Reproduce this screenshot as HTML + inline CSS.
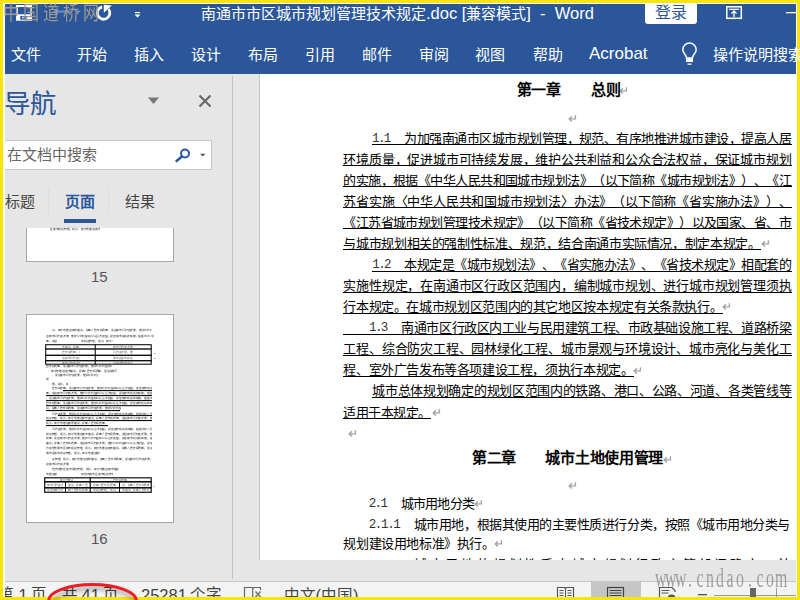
<!DOCTYPE html>
<html lang="zh-CN"><head><meta charset="utf-8">
<style>
*{margin:0;padding:0;box-sizing:border-box}
html,body{width:800px;height:600px;overflow:hidden;background:#f8e508;font-family:'Liberation Sans',sans-serif}
.a{position:absolute;white-space:pre}
svg{position:absolute;overflow:visible}
#win{position:absolute;left:3px;top:3px;width:794px;height:594px;background:#fff}
#blue{position:absolute;left:5px;top:4px;width:791px;height:70px;background:#2b579a}
.tab{position:absolute;top:45px;color:#fff;font-size:15px;line-height:20px;white-space:pre}
#main{position:absolute;left:5px;top:74px;width:791px;height:507px;background:#e6e6e6}
#doc{position:absolute;left:260px;top:74px;width:536px;height:486px;background:#fff;overflow:hidden}
.dl{position:absolute;white-space:pre;line-height:21px;color:#000;text-spacing-trim:space-all}
.ul{position:absolute;height:1px;background:#000}
.pm{position:absolute;font-family:'Liberation Sans',sans-serif;font-size:11px;line-height:14px;color:#a0a0a0}
#status{position:absolute;left:5px;top:581px;width:791px;height:16px;background:#f3f3f3;border-top:1px solid #c6c6c6;overflow:hidden}
.st{position:absolute;top:3px;font-size:15.5px;line-height:20px;color:#444;white-space:pre}
.lt{font-size:16.5px}
.ntab{position:absolute;top:192px;font-size:15px;line-height:20px;color:#444;white-space:pre}
.thumb{position:absolute;background:#fff;border:1px solid #a6a6a6}
.pn{position:absolute;font-size:15px;line-height:18px;color:#555}
.h{font-weight:bold;font-size:15px}
</style></head><body>
<div id="win"></div>
<div id="blue"></div>
<!-- QAT -->
<svg style="left:0;top:0" width="800" height="75">
  <!-- save -->
  <rect x="17" y="6" width="14" height="13.7" fill="none" stroke="#fff" stroke-width="2"/>
  <rect x="18" y="14.3" width="12" height="5" fill="#fff"/>
  <rect x="20.2" y="16" width="6.5" height="3.6" fill="#2b579a"/>
  <rect x="22.3" y="16.6" width="1.3" height="1.8" fill="#fff"/>
  <!-- faded undo -->
  <path d="M57 11.5 H70" stroke="#7f9ccc" stroke-width="2.2" fill="none" opacity="0.75"/>
  <path d="M53 11.5 l5 -4 v8z" fill="#7f9ccc" opacity="0.75"/>
  <path d="M75.5 10.5 h5.5 l-2.75 3z" fill="#7f9ccc" opacity="0.8"/>
  <!-- redo -->
  <path d="M102.1 6.8 A6.3 6.3 0 1 0 108.5 9" stroke="#fff" stroke-width="2.8" fill="none"/>
  <path d="M103.8 4.8 L111.8 5.6 L103.8 12.8 Z" fill="#fff"/>
  <!-- qat dropdown -->
  <rect x="135" y="12" width="5" height="1.2" fill="#fff"/>
  <path d="M134.5 14.5 h6 l-3 3z" fill="#fff"/>
  <!-- restore -->
  <rect x="726.8" y="6.8" width="14.5" height="11.5" fill="none" stroke="#fff" stroke-width="1.5"/>
  <path d="M729 9.3 h10" stroke="#fff" stroke-width="1.2"/>
  <path d="M734 17 v-5.5 M731.5 13.5 l2.5 -2.5 l2.5 2.5" stroke="#fff" stroke-width="1.3" fill="none"/>
  <!-- minimize -->
  <rect x="786" y="12" width="10" height="1.3" fill="#fff"/>
  <!-- bulb -->
  <path d="M686.5 58 C686.5 55 682.8 53 682.8 49.8 A6.7 6.7 0 0 1 696.2 49.8 C696.2 53 692.5 55 692.5 58 Z" fill="none" stroke="#fff" stroke-width="1.5"/>
  <rect x="686" y="58.5" width="7" height="3.5" fill="#fff"/>
  <rect x="687.5" y="63.5" width="4" height="1.3" fill="#fff"/>
</svg>
<div class="a" style="left:3px;top:0px;font-family:'Liberation Serif',serif;font-size:16px;line-height:24px;color:#a09a94;letter-spacing:4px;transform:scaleY(1.2);transform-origin:0 0">中国道桥网</div>
<div class="a" style="left:201px;top:3px;color:#fff;font-size:15px;line-height:20px">南通市市区城市规划管理技术规定<span style="font-size:16.5px">.doc [</span>兼容模式<span style="font-size:16.5px">]  -  Word</span></div>
<div class="a" style="left:645px;top:3px;width:52px;height:21px;background:#fff;border-radius:0 0 3px 3px"></div>
<div class="a" style="left:655px;top:2.5px;color:#2b579a;font-size:16px;line-height:20px">登录</div>
<div class="tab" style="left:11px">文件</div>
<div class="tab" style="left:76.5px">开始</div>
<div class="tab" style="left:133.5px">插入</div>
<div class="tab" style="left:191px">设计</div>
<div class="tab" style="left:248px">布局</div>
<div class="tab" style="left:305px">引用</div>
<div class="tab" style="left:362px">邮件</div>
<div class="tab" style="left:419px">审阅</div>
<div class="tab" style="left:475px">视图</div>
<div class="tab" style="left:533px">帮助</div>
<div class="tab" style="left:589px;font-size:17px;top:44px">Acrobat</div>
<div class="tab" style="left:712.5px">操作说明搜索</div>

<div id="main"></div>
<!-- nav pane -->
<div class="a" style="left:5px;top:140px;width:207px;height:30px;background:#fff;border:1px solid #c6c6c6;border-left:none"></div>

<div class="a" style="left:4px;top:88px;font-size:26.5px;line-height:32px;color:#2b579a">导航</div>
<svg style="left:0;top:0" width="240" height="580">
  <path d="M148 97.5 h11 l-5.5 6.5z" fill="#777"/>
  <path d="M199.5 95.5 L210.5 106.5 M210.5 95.5 L199.5 106.5" stroke="#666" stroke-width="2.1"/>
  <circle cx="185" cy="153.5" r="4" fill="none" stroke="#2b579a" stroke-width="2"/>
  <path d="M182 156.5 L176.5 161" stroke="#2b579a" stroke-width="2.4" stroke-linecap="round"/>
  <path d="M200 153.8 h5.5 l-2.75 2.6z" fill="#555"/>
  <rect x="48" y="188" width="1" height="26" fill="#dcdcdc"/>
  <rect x="108" y="188" width="1" height="26" fill="#dcdcdc"/>
  <rect x="64" y="219" width="32" height="4" fill="#2b579a"/>
  <rect x="232" y="76" width="1" height="503" fill="#c2c2c2"/>
  <rect x="259" y="74" width="1" height="486" fill="#c6c6c6"/>
</svg>
<div class="a" style="left:7px;top:145px;font-size:15px;line-height:20px;color:#666">在文档中搜索</div>
<div class="ntab" style="left:5px">标题</div>
<div class="ntab" style="left:65px;color:#2b579a;font-weight:bold">页面</div>
<div class="ntab" style="left:125px">结果</div>
<div class="thumb" style="left:26px;top:228px;width:148px;height:34px;border-top:none"></div>
<div class="pn" style="left:91px;top:268px">15</div>
<div class="thumb" style="left:26px;top:314px;width:148px;height:209px"></div>
<div style='position:absolute;left:0;top:0;width:1000px;height:2700px;transform:scale(0.2);transform-origin:0 0'><div style='position:absolute;left:260px;top:1643px;width:498px;height:20px;overflow:hidden;white-space:nowrap;font-size:14px;line-height:16px;color:#2a2a2a'>范、有序地推进城市建设，提高人居环境质量，促进城市可持续发展，维护公共利益和公众</div><div style='position:absolute;left:230px;top:1672px;width:540px;height:20px;overflow:hidden;white-space:nowrap;font-size:14px;line-height:16px;color:#2a2a2a'>进城市可持续发展，维护公共利益和公众合法权益，保证城市规划的实施，根据中华人民共和国城</div><div style='position:absolute;left:230px;top:1698px;width:55px;height:20px;overflow:hidden;white-space:nowrap;font-size:14px;line-height:16px;color:#2a2a2a'>量，促进城市</div><div style='position:absolute;left:405px;top:1698px;width:158px;height:20px;overflow:hidden;white-space:nowrap;font-size:14px;line-height:16px;color:#2a2a2a'>市规划管理，规范、有序地推进</div><div style='position:absolute;left:310px;top:1726px;width:90px;height:20px;overflow:hidden;white-space:nowrap;font-size:14px;line-height:16px;color:#666'>市建设，提高人居</div><div style='position:absolute;left:565px;top:1726px;width:100px;height:20px;overflow:hidden;white-space:nowrap;font-size:14px;line-height:16px;color:#666'>城市可持续发展，维</div><div style='position:absolute;left:310px;top:1753px;width:90px;height:20px;overflow:hidden;white-space:nowrap;font-size:14px;line-height:16px;color:#666'>居环境质量，促进</div><div style='position:absolute;left:565px;top:1753px;width:100px;height:20px;overflow:hidden;white-space:nowrap;font-size:14px;line-height:16px;color:#666'>可持续发展，维护公</div><div style='position:absolute;left:310px;top:1782px;width:90px;height:20px;overflow:hidden;white-space:nowrap;font-size:14px;line-height:16px;color:#666'>进城市可持续发展</div><div style='position:absolute;left:565px;top:1782px;width:100px;height:20px;overflow:hidden;white-space:nowrap;font-size:14px;line-height:16px;color:#666'>通市区城市规划管理</div><div style='position:absolute;left:310px;top:1807px;width:90px;height:20px;overflow:hidden;white-space:nowrap;font-size:14px;line-height:16px;color:#666'>城市可持续发展，</div><div style='position:absolute;left:565px;top:1807px;width:100px;height:20px;overflow:hidden;white-space:nowrap;font-size:14px;line-height:16px;color:#666'>为加强南通市区城市</div><div style='position:absolute;left:230px;top:1824px;width:330px;height:20px;overflow:hidden;white-space:nowrap;font-size:14px;line-height:16px;color:#2a2a2a'>居环境质量，促进城市可持续发展，维护公共利益和公众合法</div><div style='position:absolute;left:240px;top:1845px;width:345px;height:20px;overflow:hidden;white-space:nowrap;font-size:14px;line-height:16px;color:#2a2a2a'>、有序地推进城市建设，提高人居环境质量，促进城市可持续发</div><div style='position:absolute;left:260px;top:1866px;width:230px;height:20px;overflow:hidden;white-space:nowrap;font-size:14px;line-height:16px;color:#2a2a2a'>，促进城市可持续发展，维护公共利益和公</div><div style='position:absolute;left:230px;top:1885px;width:15px;height:20px;overflow:hidden;white-space:nowrap;font-size:14px;line-height:16px;color:#2a2a2a'>规范、</div><div style='position:absolute;left:260px;top:1910px;width:80px;height:20px;overflow:hidden;white-space:nowrap;font-size:14px;line-height:16px;color:#2a2a2a'>理，规范、有序地</div><div style='position:absolute;left:260px;top:1934px;width:500px;height:20px;overflow:hidden;white-space:nowrap;font-size:14px;line-height:16px;color:#2a2a2a'>居环境质量，促进城市可持续发展，维护公共利益和公众合法权益，保证城市规划的实施，</div><div style='position:absolute;left:230px;top:1958px;width:530px;height:20px;overflow:hidden;white-space:nowrap;font-size:14px;line-height:16px;color:#2a2a2a'>量，促进城市可持续发展，维护公共利益和公众合法权益，保证城市规划的实施，根据中华人民</div><div style='position:absolute;left:230px;top:1983px;width:530px;height:20px;overflow:hidden;white-space:nowrap;font-size:14px;line-height:16px;color:#2a2a2a'>，促进城市可持续发展，维护公共利益和公众合法权益，保证城市规划的实施，根据中华人民共</div><div style='position:absolute;left:230px;top:2008px;width:530px;height:20px;overflow:hidden;white-space:nowrap;font-size:14px;line-height:16px;color:#2a2a2a'>居环境质量，促进城市可持续发展，维护公共利益和公众合法权益，保证城市规划的实施，根据</div><div style='position:absolute;left:230px;top:2033px;width:375px;height:20px;overflow:hidden;white-space:nowrap;font-size:14px;line-height:16px;color:#2a2a2a'>设，提高人居环境质量，促进城市可持续发展，维护公共利益和公众</div><div style='position:absolute;left:260px;top:2060px;width:500px;height:20px;overflow:hidden;white-space:nowrap;font-size:14px;line-height:16px;color:#2a2a2a'>可持续发展，维护公共利益和公众合法权益，保证城市规划的实施，根据中华人民共和国城</div><div style='position:absolute;left:230px;top:2084px;width:530px;height:20px;overflow:hidden;white-space:nowrap;font-size:14px;line-height:16px;color:#2a2a2a'>规划管理，规范、有序地推进城市建设，提高人居环境质量，促进城市可持续发展，维护公共利</div><div style='position:absolute;left:230px;top:2108px;width:310px;height:20px;overflow:hidden;white-space:nowrap;font-size:14px;line-height:16px;color:#2a2a2a'>规范、有序地推进城市建设，提高人居环境质量，促进城</div><div style='position:absolute;left:260px;top:2138px;width:500px;height:20px;overflow:hidden;white-space:nowrap;font-size:14px;line-height:16px;color:#2a2a2a'>可持续发展，维护公共利益和公众合法权益，保证城市规划的实施，根据中华人民共和国城</div><div style='position:absolute;left:230px;top:2160px;width:530px;height:20px;overflow:hidden;white-space:nowrap;font-size:14px;line-height:16px;color:#2a2a2a'>规划管理，规范、有序地推进城市建设，提高人居环境质量，促进城市可持续发展，维护公共利</div><div style='position:absolute;left:230px;top:2184px;width:530px;height:20px;overflow:hidden;white-space:nowrap;font-size:14px;line-height:16px;color:#2a2a2a'>质量，促进城市可持续发展，维护公共利益和公众合法权益，保证城市规划的实施，根据中华人</div><div style='position:absolute;left:230px;top:2208px;width:530px;height:20px;overflow:hidden;white-space:nowrap;font-size:14px;line-height:16px;color:#2a2a2a'>建设，提高人居环境质量，促进城市可持续发展，维护公共利益和公众合法权益，保证城市规划</div><div style='position:absolute;left:230px;top:2230px;width:530px;height:20px;overflow:hidden;white-space:nowrap;font-size:14px;line-height:16px;color:#2a2a2a'>为加强南通市区城市规划管理，规范、有序地推进城市建设，提高人居环境质量，促进城市可持</div><div style='position:absolute;left:230px;top:2256px;width:270px;height:20px;overflow:hidden;white-space:nowrap;font-size:14px;line-height:16px;color:#2a2a2a'>通市区城市规划管理，规范、有序地推进城市建设</div><div style='position:absolute;left:260px;top:2286px;width:500px;height:20px;overflow:hidden;white-space:nowrap;font-size:14px;line-height:16px;color:#2a2a2a'>划管理，规范、有序地推进城市建设，提高人居环境质量，促进城市可持续发展，维护公共</div><div style='position:absolute;left:230px;top:2311px;width:115px;height:20px;overflow:hidden;white-space:nowrap;font-size:14px;line-height:16px;color:#2a2a2a'>进城市可持续发展，维</div><div style='position:absolute;left:260px;top:2336px;width:335px;height:20px;overflow:hidden;white-space:nowrap;font-size:14px;line-height:16px;color:#2a2a2a'>强南通市区城市规划管理，规范、有序地推进城市建设，提高</div><div style='position:absolute;left:230px;top:2362px;width:55px;height:20px;overflow:hidden;white-space:nowrap;font-size:14px;line-height:16px;color:#2a2a2a'>地推进城市建</div><div style='position:absolute;left:405px;top:2362px;width:160px;height:20px;overflow:hidden;white-space:nowrap;font-size:14px;line-height:16px;color:#2a2a2a'>加强南通市区城市规划管理，规</div><div style='position:absolute;left:300px;top:2391px;width:65px;height:20px;overflow:hidden;white-space:nowrap;font-size:14px;line-height:16px;color:#666'>有序地推进城市</div><div style='position:absolute;left:565px;top:2391px;width:75px;height:20px;overflow:hidden;white-space:nowrap;font-size:14px;line-height:16px;color:#666'>居环境质量，促</div><div style='position:absolute;left:235px;top:2416px;width:80px;height:20px;overflow:hidden;white-space:nowrap;font-size:14px;line-height:16px;color:#666'>城市可持续发展，</div><div style='position:absolute;left:340px;top:2416px;width:100px;height:20px;overflow:hidden;white-space:nowrap;font-size:14px;line-height:16px;color:#666'>建设，提高人居环境</div><div style='position:absolute;left:465px;top:2416px;width:120px;height:20px;overflow:hidden;white-space:nowrap;font-size:14px;line-height:16px;color:#666'>提高人居环境质量，促进</div><div style='position:absolute;left:610px;top:2416px;width:135px;height:20px;overflow:hidden;white-space:nowrap;font-size:14px;line-height:16px;color:#666'>设，提高人居环境质量，促</div><div style='position:absolute;left:235px;top:2442px;width:80px;height:20px;overflow:hidden;white-space:nowrap;font-size:14px;line-height:16px;color:#666'>促进城市可持续发</div><div style='position:absolute;left:340px;top:2442px;width:100px;height:20px;overflow:hidden;white-space:nowrap;font-size:14px;line-height:16px;color:#666'>高人居环境质量，促</div><div style='position:absolute;left:465px;top:2442px;width:120px;height:20px;overflow:hidden;white-space:nowrap;font-size:14px;line-height:16px;color:#666'>市规划管理，规范、有序</div><div style='position:absolute;left:610px;top:2442px;width:135px;height:20px;overflow:hidden;white-space:nowrap;font-size:14px;line-height:16px;color:#666'>市建设，提高人居环境质量</div><div style='position:absolute;left:250px;top:1137px;width:250px;height:20px;overflow:hidden;white-space:nowrap;font-size:14px;line-height:16px;color:#2a2a2a'>区城市规划管理，规范、有序地推进城市建设，</div></div><svg style='left:0;top:0' width='200' height='540'><rect x='45.7' y='344.7' width='105.5' height='19.5' fill='none' stroke='#111' stroke-width='1.1'/><rect x='45.2' y='348.3' width='106.5' height='1.4' fill='#111'/><rect x='45.2' y='354.6' width='106.5' height='1.4' fill='#111'/><rect x='45.2' y='360.0' width='106.5' height='1.4' fill='#111'/><rect x='94.7' y='344.2' width='1.1' height='20.5' fill='#111'/><rect x='63' y='390.0' width='89' height='1.1' fill='#111'/><rect x='46' y='395.0' width='106' height='1.1' fill='#111'/><rect x='46' y='400.0' width='106' height='1.1' fill='#111'/><rect x='46' y='405.1' width='106' height='1.1' fill='#111'/><rect x='46' y='410.0' width='74' height='1.1' fill='#111'/><rect x='58' y='415.0' width='94' height='1.1' fill='#111'/><rect x='46' y='420.0' width='106' height='1.1' fill='#111'/><rect x='46' y='425.0' width='62' height='1.1' fill='#111'/><rect x='44.7' y='477.8' width='106.5' height='14.5' fill='none' stroke='#111' stroke-width='1.2'/><rect x='44.2' y='481.0' width='107.5' height='1.6' fill='#111'/><rect x='44.2' y='487.0' width='107.5' height='1.6' fill='#111'/><rect x='89.6' y='477.3' width='1.2' height='15.3' fill='#111'/><rect x='65' y='482' width='1' height='10.5' fill='#111'/><rect x='119' y='482' width='1' height='10.5' fill='#111'/><rect x='153.5' y='486' width='1.5' height='0.8' fill='#999'/><rect x='154' y='353' width='1.5' height='0.8' fill='#999'/><rect x='154' y='358' width='1.5' height='0.8' fill='#999'/></svg>
<div class="pn" style="left:91px;top:530px">16</div>

<div id="doc">
<div class='dl' style="left:112.00px;top:54.50px;font-family:'Liberation Mono', monospace;font-size:12.5px;color:#333;letter-spacing:-1.608px">1.1</div>
<div class='dl' style="left:144.30px;top:53.50px;font-family:'Liberation Serif', serif;font-size:13px;letter-spacing:-0.520px">为加强南通市区城市规划管理，规范、有序地推进城市建设，提高人居</div>
<div class='dl' style="left:83.30px;top:74.58px;font-family:'Liberation Serif', serif;font-size:13px;letter-spacing:-0.194px">环境质量，促进城市可持续发展，维护公共利益和公众合法权益，保证城市规划</div>
<div class='dl' style="left:83.30px;top:95.66px;font-family:'Liberation Serif', serif;font-size:13px;letter-spacing:-0.560px">的实施，根据《中华人民共和国城市规划法》（以下简称《城市规划法》）、《江</div>
<div class='dl' style="left:83.30px;top:116.74px;font-family:'Liberation Serif', serif;font-size:13px;letter-spacing:-0.194px">苏省实施〈中华人民共和国城市规划法〉办法》（以下简称《省实施办法》）、</div>
<div class='dl' style="left:83.30px;top:137.82px;font-family:'Liberation Serif', serif;font-size:13px;letter-spacing:-0.560px">《江苏省城市规划管理技术规定》（以下简称《省技术规定》）以及国家、省、市</div>
<div class='dl' style="left:83.30px;top:158.90px;font-family:'Liberation Serif', serif;font-size:13px;letter-spacing:-0.353px">与城市规划相关的强制性标准、规范，结合南通市实际情况，制定本规定。</div>
<div class='dl' style="left:112.30px;top:180.98px;font-family:'Liberation Mono', monospace;font-size:12.5px;color:#333;letter-spacing:-1.608px">1.2</div>
<div class='dl' style="left:144.30px;top:179.98px;font-family:'Liberation Serif', serif;font-size:13px;letter-spacing:-0.520px">本规定是《城市规划法》、《省实施办法》、《省技术规定》相配套的</div>
<div class='dl' style="left:83.30px;top:201.06px;font-family:'Liberation Serif', serif;font-size:13px;letter-spacing:-0.194px">实施性规定，在南通市区行政区范围内，编制城市规划、进行城市规划管理须执</div>
<div class='dl' style="left:83.30px;top:222.14px;font-family:'Liberation Serif', serif;font-size:13px;letter-spacing:-0.366px">行本规定。在城市规划区范围内的其它地区按本规定有关条款执行。</div>
<div class='dl' style="left:109.00px;top:244.22px;font-family:'Liberation Mono', monospace;font-size:12.5px;color:#333;letter-spacing:-1.608px">1.3</div>
<div class='dl' style="left:141.20px;top:243.22px;font-family:'Liberation Serif', serif;font-size:13px;letter-spacing:-0.417px">南通市区行政区内工业与民用建筑工程、市政基础设施工程、道路桥梁</div>
<div class='dl' style="left:83.30px;top:264.30px;font-family:'Liberation Serif', serif;font-size:13px;letter-spacing:-0.194px">工程、综合防灾工程、园林绿化工程、城市景观与环境设计、城市亮化与美化工</div>
<div class='dl' style="left:83.30px;top:285.38px;font-family:'Liberation Serif', serif;font-size:13px;letter-spacing:-0.389px">程、室外广告发布等各项建设工程，须执行本规定。</div>
<div class='dl' style="left:112.20px;top:306.46px;font-family:'Liberation Serif', serif;font-size:13px;letter-spacing:-0.297px">城市总体规划确定的规划区范围内的铁路、港口、公路、河道、各类管线等</div>
<div class='dl' style="left:83.30px;top:327.54px;font-family:'Liberation Serif', serif;font-size:13px;letter-spacing:-0.508px">适用于本规定。</div>
<div class='dl' style="left:108.70px;top:420.00px;font-family:'Liberation Mono', monospace;font-size:12.5px;color:#333;letter-spacing:-1.608px">2.1</div>
<div class='dl' style="left:140.70px;top:419.00px;font-family:'Liberation Serif', serif;font-size:13px;letter-spacing:-0.740px">城市用地分类</div>
<div class='dl' style="left:108.70px;top:440.50px;font-family:'Liberation Mono', monospace;font-size:12.5px;color:#333;letter-spacing:-1.354px">2.1.1</div>
<div class='dl' style="left:153.80px;top:439.50px;font-family:'Liberation Serif', serif;font-size:13px;letter-spacing:-0.459px">城市用地，根据其使用的主要性质进行分类，按照《城市用地分类与</div>
<div class='dl' style="left:83.30px;top:459.00px;font-family:'Liberation Serif', serif;font-size:13px;letter-spacing:-0.391px">规划建设用地标准》执行。</div>
<div class='dl' style="left:153.80px;top:480.00px;font-family:'Liberation Serif', serif;font-size:13px;letter-spacing:2.813px">城市用地的规划性质由城市规划行政主管部门确定，并</div>
<div class='ul' style='left:111.9px;top:70.0px;width:419.8px'></div>
<div class='ul' style='left:83.3px;top:91.1px;width:448.4px'></div>
<div class='ul' style='left:83.3px;top:112.2px;width:448.4px'></div>
<div class='ul' style='left:83.3px;top:133.2px;width:448.4px'></div>
<div class='ul' style='left:83.3px;top:154.3px;width:448.4px'></div>
<div class='ul' style='left:83.3px;top:175.4px;width:417.7px'></div>
<div class='ul' style='left:112.2px;top:196.5px;width:419.5px'></div>
<div class='ul' style='left:83.3px;top:217.6px;width:448.4px'></div>
<div class='ul' style='left:83.3px;top:238.6px;width:379.4px'></div>
<div class='ul' style='left:83.0px;top:259.7px;width:448.7px'></div>
<div class='ul' style='left:83.3px;top:280.8px;width:448.4px'></div>
<div class='ul' style='left:83.3px;top:301.9px;width:290.4px'></div>
<div class='ul' style='left:112.2px;top:323.0px;width:419.5px'></div>
<div class='ul' style='left:83.3px;top:344.0px;width:87.9px'></div>
<svg class='pm' style='left:500.5px;top:166.2px' width='9' height='8'><path d='M7.4 0.3 V3.9 H1.3 M3.9 1.2 L1.2 3.9 L3.9 6.6' fill='none' stroke='#a4a4a4' stroke-width='1.4'/></svg>
<svg class='pm' style='left:462.0px;top:229.4px' width='9' height='8'><path d='M7.4 0.3 V3.9 H1.3 M3.9 1.2 L1.2 3.9 L3.9 6.6' fill='none' stroke='#a4a4a4' stroke-width='1.4'/></svg>
<svg class='pm' style='left:372.5px;top:292.7px' width='9' height='8'><path d='M7.4 0.3 V3.9 H1.3 M3.9 1.2 L1.2 3.9 L3.9 6.6' fill='none' stroke='#a4a4a4' stroke-width='1.4'/></svg>
<svg class='pm' style='left:171.5px;top:334.8px' width='9' height='8'><path d='M7.4 0.3 V3.9 H1.3 M3.9 1.2 L1.2 3.9 L3.9 6.6' fill='none' stroke='#a4a4a4' stroke-width='1.4'/></svg>
<svg class='pm' style='left:213.5px;top:426.3px' width='9' height='8'><path d='M7.4 0.3 V3.9 H1.3 M3.9 1.2 L1.2 3.9 L3.9 6.6' fill='none' stroke='#a4a4a4' stroke-width='1.4'/></svg>
<svg class='pm' style='left:233.5px;top:466.3px' width='9' height='8'><path d='M7.4 0.3 V3.9 H1.3 M3.9 1.2 L1.2 3.9 L3.9 6.6' fill='none' stroke='#a4a4a4' stroke-width='1.4'/></svg>
<svg class='pm' style='left:359.0px;top:12.8px' width='9' height='8'><path d='M7.4 0.3 V3.9 H1.3 M3.9 1.2 L1.2 3.9 L3.9 6.6' fill='none' stroke='#a4a4a4' stroke-width='1.4'/></svg>
<svg class='pm' style='left:308.0px;top:40.8px' width='9' height='8'><path d='M7.4 0.3 V3.9 H1.3 M3.9 1.2 L1.2 3.9 L3.9 6.6' fill='none' stroke='#a4a4a4' stroke-width='1.4'/></svg>
<svg class='pm' style='left:87.5px;top:356.3px' width='9' height='8'><path d='M7.4 0.3 V3.9 H1.3 M3.9 1.2 L1.2 3.9 L3.9 6.6' fill='none' stroke='#a4a4a4' stroke-width='1.4'/></svg>
<svg class='pm' style='left:402.5px;top:381.8px' width='9' height='8'><path d='M7.4 0.3 V3.9 H1.3 M3.9 1.2 L1.2 3.9 L3.9 6.6' fill='none' stroke='#a4a4a4' stroke-width='1.4'/></svg>
<svg class='pm' style='left:307.6px;top:408.0px' width='9' height='8'><path d='M7.4 0.3 V3.9 H1.3 M3.9 1.2 L1.2 3.9 L3.9 6.6' fill='none' stroke='#a4a4a4' stroke-width='1.4'/></svg>
<div class='dl' style="left:256.50px;top:5.50px;font-family:'Liberation Serif', serif;font-size:15px;font-weight:bold;letter-spacing:-0.500px">第一章</div>
<div class='dl' style="left:330.50px;top:5.50px;font-family:'Liberation Serif', serif;font-size:15px;font-weight:bold;letter-spacing:0.000px">总则</div>
<div class='dl' style="left:211.80px;top:373.70px;font-family:'Liberation Serif', serif;font-size:15px;font-weight:bold;letter-spacing:-0.150px">第二章</div>
<div class='dl' style="left:285.30px;top:373.70px;font-family:'Liberation Serif', serif;font-size:15px;font-weight:bold;letter-spacing:-0.257px">城市土地使用管理</div>
</div>

<div id="status"></div>
<div class="a" style="left:5px;top:582px;width:791px;height:15px;overflow:hidden">
  <div class="st" style="left:-7px">第</div>
  <div class="st lt" style="left:13.5px">1</div>
  <div class="st" style="left:26px">页，</div>
  <div class="st" style="left:57px">共</div>
  <div class="st lt" style="left:76.5px">41</div>
  <div class="st" style="left:98px">页</div>
  <div class="st lt" style="left:136px">25281</div>
  <div class="st" style="left:184.5px">个字</div>
  <div class="st" style="left:278.5px">中文<span class="lt">(</span>中国<span class="lt">)</span></div>
  <div class="a" style="left:586px;top:0;width:50px;height:15px;background:#c6c6c6"></div>
</div>
<svg style="left:0;top:0" width="800" height="600">
  <!-- proofing -->
  <path d="M244.5 597 V587.5 H252 L253 588.5 L254 587.5 H260.5 V590" fill="none" stroke="#666" stroke-width="1.2"/>
  <path d="M252.7 589 V597" stroke="#666" stroke-width="1.2"/>
  <path d="M255.5 591.5 L260.5 597 M260.5 591.5 L255.5 597" stroke="#777" stroke-width="1.5"/>
  <!-- read mode -->
  <path d="M557.5 597 V587.5 H564.5 L565.5 588.5 L566.5 587.5 H573.5 V597" fill="none" stroke="#555" stroke-width="1.2"/>
  <path d="M565.5 588.5 V597" stroke="#555" stroke-width="1"/>
  <path d="M559.5 590.5 h4 M559.5 593 h4 M559.5 595.5 h4 M567.5 590.5 h4 M567.5 593 h4 M567.5 595.5 h4" stroke="#555" stroke-width="1"/>
  <!-- print -->
  <rect x="607.5" y="587.5" width="16" height="12" fill="none" stroke="#444" stroke-width="1.2"/>
  <path d="M609.5 590.5 h12 M609.5 593 h12 M609.5 595.5 h12" stroke="#444" stroke-width="1"/>
  <!-- web -->
  <path d="M659.5 599 V587.5 H672 L675 590.5 V592" fill="none" stroke="#555" stroke-width="1.2"/>
  <path d="M661.5 590.5 h8 M661.5 593 h7" stroke="#555" stroke-width="1"/>
  <circle cx="671.5" cy="598.5" r="4" fill="#555"/>
  <!-- zoom -->
  <rect x="698" y="594" width="9" height="1.3" fill="#555"/>
  <rect x="714" y="595" width="82" height="1" fill="#999"/>
  <rect x="776" y="588" width="1" height="9" fill="#999"/>
  <rect x="750" y="588" width="6" height="9" fill="#666"/>
</svg>
<!-- watermark -->
<div class="a" style="left:655px;top:564.3px;font-family:'Liberation Serif',serif;font-size:28.3px;line-height:28.3px;color:#8c8c8c;transform:scaleX(0.56);transform-origin:0 0;opacity:0.8"><span style='display:inline-block;width:17.86px;text-align:center'>w</span><span style='display:inline-block;width:17.86px;text-align:center'>w</span><span style='display:inline-block;width:17.86px;text-align:center'>w</span><span style='display:inline-block;width:17.86px;text-align:center'>.</span><span style='display:inline-block;width:17.86px;text-align:center'>c</span><span style='display:inline-block;width:17.86px;text-align:center'>n</span><span style='display:inline-block;width:17.86px;text-align:center'>d</span><span style='display:inline-block;width:17.86px;text-align:center'>a</span><span style='display:inline-block;width:17.86px;text-align:center'>o</span><span style='display:inline-block;width:17.86px;text-align:center'>.</span><span style='display:inline-block;width:17.86px;text-align:center'>c</span><span style='display:inline-block;width:17.86px;text-align:center'>o</span><span style='display:inline-block;width:17.86px;text-align:center'>m</span></div>
<div class="a" style="left:0;top:597px;width:800px;height:3px;background:#f8e508"></div>
<!-- red ellipse -->
<svg style="left:0;top:0" width="800" height="600">
  <defs><filter id="bl" x="-20%" y="-50%" width="140%" height="200%"><feGaussianBlur stdDeviation="2"/></filter></defs>
  <ellipse cx="94.5" cy="605" rx="42" ry="17" fill="none" stroke="#000" stroke-opacity="0.28" stroke-width="4" filter="url(#bl)"/>
  <ellipse cx="92.5" cy="601" rx="44" ry="16.5" fill="none" stroke="#ee1c24" stroke-width="3"/>
</svg>
</body></html>
